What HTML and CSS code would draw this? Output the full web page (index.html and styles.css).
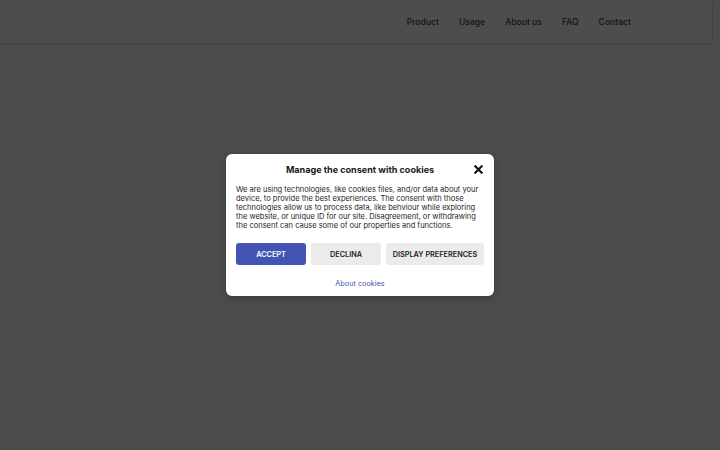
FILE: index.html
```html
<!DOCTYPE html>
<html lang="en">
<head>
<meta charset="utf-8">
<title>Cookies</title>
<link rel="stylesheet" href="styles.css">
</head>
<body>
<header class="site-header">
  <nav class="nav">
    <a href="#">Product</a>
    <a href="#">Usage</a>
    <a href="#">About us</a>
    <a href="#">FAQ</a>
    <a href="#">Contact</a>
  </nav>
</header>
<div class="overlay">
  <div class="dialog">
    <div class="dialog-head">
      <h2 class="dialog-title">Manage the consent with cookies</h2>
      <span class="close">
        <svg width="9" height="9" viewBox="0 0 10 10"><path d="M1.5 1.5 L8.5 8.5 M8.5 1.5 L1.5 8.5" stroke="#111" stroke-width="2.4" stroke-linecap="square"/></svg>
      </span>
    </div>
    <p class="dialog-text">We are using technologies, like cookies files, and/or data about your device, to provide the best experiences. The consent with those technologies allow us to process data, like behviour while exploring the website, or unique ID for our site. Disagreement, or withdrawing the consent can cause some of our properties and functions.</p>
    <div class="buttons">
      <button class="btn btn-primary">ACCEPT</button>
      <button class="btn">DECLINA</button>
      <button class="btn btn-wide">DISPLAY PREFERENCES</button>
    </div>
    <a class="about" href="#">About cookies</a>
  </div>
</div>
</body>
</html>
```
FILE: styles.css
```css
html, body {
  margin: 0;
  padding: 0;
  height: 100%;
}
body {
  background: #4c4c4c;
  font-family: Inter, "Liberation Sans", sans-serif;
  overflow: hidden;
}
.site-header {
  width: 712px;
  height: 43px;
  background: #4d4d4d;
  box-shadow: 0 1px 1px rgba(0,0,0,0.12), 1px 0 1px rgba(0,0,0,0.08);
  display: flex;
  justify-content: flex-end;
  align-items: center;
}
.nav {
  display: flex;
  gap: 20px;
  margin-right: 81px;
}
.nav a {
  color: #141414;
  text-decoration: none;
  font-size: 8.6px;
  font-weight: 500;
}
.overlay {
  display: flex;
  justify-content: center;
  padding-top: 111px;
}
.dialog {
  width: 248px;
  background: #fff;
  border-radius: 6px;
  padding: 8px 10px 8px;
  box-shadow: 0 2px 6px rgba(0,0,0,0.25);
  display: flex;
  flex-direction: column;
}
.dialog-head {
  display: flex;
  align-items: center;
  justify-content: center;
  position: relative;
  height: 14px;
}
.dialog-title {
  margin: 0;
  font-size: 9.05px;
  font-weight: 700;
  color: #1a1a1a;
}
.close {
  position: absolute;
  right: 1px;
  top: 3px;
  line-height: 0;
}
.dialog-text {
  margin: 9px 0 0;
  font-family: Inter, "Liberation Sans", sans-serif;
  font-size: 7.52px;
  line-height: 9px;
  color: #1e1e1e;
}
.buttons {
  display: flex;
  gap: 5px;
  margin-top: 13px;
}
.btn {
  border: 0;
  height: 22px;
  width: 70px;
  border-radius: 3px;
  background: #ebebeb;
  color: #222;
  font-family: Inter, "Liberation Sans", sans-serif;
  font-size: 7.3px;
  font-weight: 600;
  padding: 0;
}
.btn-wide {
  width: 98px;
}
.btn-primary {
  background: #4354b4;
  color: #fff;
}
.about {
  align-self: center;
  margin-top: 14px;
  font-size: 7.3px;
  color: #4a55ad;
  text-decoration: none;
}
```
